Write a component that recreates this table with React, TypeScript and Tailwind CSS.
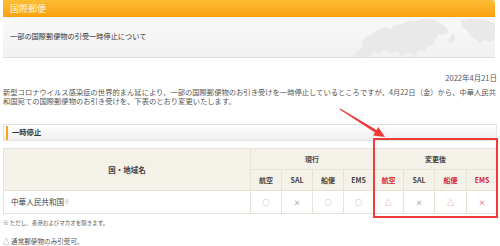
import React from "react";

const Th = ({ children, red = false }: { children: React.ReactNode; red?: boolean }) => (
  <th
    className={`h-[21px] border border-[#e6e3d6] bg-[#f4f2e8] p-0 text-center align-middle text-[7px] font-bold ${red ? "text-[#d6222f]" : "text-[#444]"}`}
  >
    {children}
  </th>
);

const Td = ({ children, color }: { children: React.ReactNode; color: string }) => (
  <td className={`h-[23px] border border-[#e6e3d6] bg-white p-0 text-center align-middle text-[7px] ${color}`}>{children}</td>
);

export default function App() {
  return (
    <div className="relative h-[246px] w-[500px] overflow-hidden bg-white font-['Noto_Sans_CJK_JP','Noto_Sans',sans-serif] text-[#444]">
      <div className="px-[3px]">
        {/* orange header */}
        <div className="flex h-[17px] w-[492px] items-center rounded-tr-[3px] bg-gradient-to-b from-[#fdbd33] to-[#f8a10a] pl-[7px] text-[9px] leading-none text-[#fff3dc]">
          国際郵便
        </div>
        {/* title box */}
        <div className="relative flex h-[41px] w-[492px] items-center overflow-hidden border-b border-[#dddddd] bg-gradient-to-b from-[#f9f9f9] to-[#f1f1f1] pl-[7px]">
          <svg className="absolute right-0 top-0" width="145" height="41" viewBox="0 0 150 41">
            <g fill="#e9e9e9">
              <path d="M4 41 L8 34 L14 30 L12 24 L18 19 L24 16 L30 12 L36 10 L42 12 L46 8 L54 6 L60 3 L68 4 L76 1 L86 2 L94 6 L100 10 L102 15 L96 18 L92 17 L88 22 L86 28 L80 30 L78 35 L72 34 L66 38 L60 36 L54 40 L48 35 L42 37 L36 33 L30 37 L24 35 L20 41 Z" />
              <path d="M104 19 L107 16 L109 21 L106 27 L102 25 Z" />
              <path d="M114 3 L124 1 L138 2 L150 6 L150 22 L145 25 L139 23 L134 27 L130 22 L124 18 L120 12 L116 10 Z" />
              <path d="M62 41 L67 38 L72 41 Z" />
            </g>
          </svg>
          <span className="relative text-[7.2px] leading-none text-[#333]">一部の国際郵便物の引受一時停止について</span>
        </div>

        {/* date */}
        <div className="mt-[15px] text-right text-[7.5px] leading-[10px] text-[#555]">2022年4月21日</div>

        {/* paragraph */}
        <p className="mt-[5px] text-[7.3px] leading-[9px] text-[#555]">
          新型コロナウイルス感染症の世界的まん延により、一部の国際郵便物のお引き受けを一時停止しているところですが、4月22日（金）から、中華人民共
          <br />
          和国宛ての国際郵便物のお引き受けを、下表のとおり変更いたします。
        </p>

        {/* section header */}
        <div className="mt-[18px] flex h-[17px] w-[494px] items-center border border-[#e2e2e2] bg-gradient-to-b from-[#ffffff] to-[#efefef] pl-[2px]">
          <div className="h-[14px] w-[2px] bg-[#f7a51c]" />
          <span className="ml-[4px] text-[7.3px] font-bold leading-none text-[#333]">一時停止</span>
        </div>

        {/* table */}
        <table className="mt-[7px] w-[494px] table-fixed border-collapse">
          <colgroup>
            <col className="w-[247px]" />
            <col className="w-[31px]" />
            <col className="w-[31px]" />
            <col className="w-[31px]" />
            <col className="w-[30px]" />
            <col className="w-[30px]" />
            <col className="w-[31px]" />
            <col className="w-[32px]" />
            <col className="w-[31px]" />
          </colgroup>
          <thead>
            <tr>
              <th rowSpan={2} className="border border-[#e6e3d6] bg-[#f4f2e8] p-0 text-center align-middle text-[7.5px] font-bold text-[#444]">
                国・地域名
              </th>
              <th colSpan={4} className="h-[21px] border border-[#e6e3d6] bg-[#f4f2e8] p-0 text-center align-middle text-[7px] font-bold text-[#444]">
                現行
              </th>
              <th colSpan={4} className="h-[21px] border border-[#e6e3d6] bg-[#f4f2e8] p-0 text-center align-middle text-[7px] font-bold text-[#444]">
                変更後
              </th>
            </tr>
            <tr>
              <Th>航空</Th>
              <Th>SAL</Th>
              <Th>船便</Th>
              <Th>EMS</Th>
              <Th red>航空</Th>
              <Th>SAL</Th>
              <Th red>船便</Th>
              <Th red>EMS</Th>
            </tr>
          </thead>
          <tbody>
            <tr>
              <td className="h-[23px] border border-[#e6e3d6] bg-white p-0 pl-[7px] text-left align-middle text-[7.6px] text-[#444]">
                中華人民共和国<sup className="text-[5px] text-[#999]">※</sup>
              </td>
              <Td color="text-[#999]">○</Td>
              <Td color="text-[#777] text-[6px]">×</Td>
              <Td color="text-[#999]">○</Td>
              <Td color="text-[#999]">○</Td>
              <Td color="text-[#ea5b66]">△</Td>
              <Td color="text-[#777] text-[6px]">×</Td>
              <Td color="text-[#ea5b66]">△</Td>
              <Td color="text-[#d6222f] text-[6px]">×</Td>
            </tr>
          </tbody>
        </table>

        {/* footnotes */}
        <div className="mt-[4px] text-[5.5px] leading-[10px] text-[#555]">※ ただし、香港およびマカオを除きます。</div>
        <div className="mt-[8px] text-[6.6px] leading-[10px] text-[#555]">△ 通常郵便物のみ引受可。</div>
      </div>

      {/* annotation overlays */}
      <svg className="pointer-events-none absolute left-0 top-0" width="500" height="246" viewBox="0 0 500 246">
        <polygon
          fill="#f03b3b"
          points="339.7,109.4 374.9,132.5 373.1,135.4 385,137 378.3,127.0 376.5,129.9 340.3,108.6"
        />
      </svg>
      <div className="pointer-events-none absolute left-[373px] top-[138px] h-[80px] w-[125px] border-[2.5px] border-[#f03b3b]" />
    </div>
  );
}
